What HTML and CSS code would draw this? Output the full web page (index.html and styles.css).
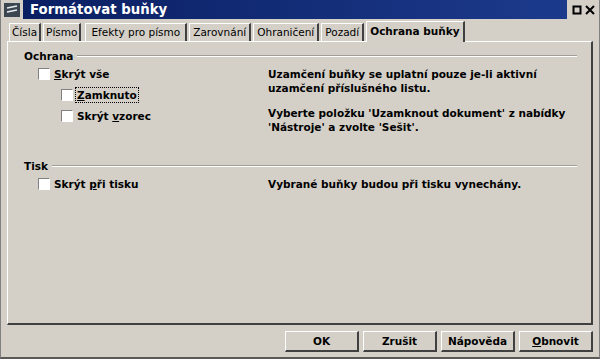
FILE: index.html
```html
<!DOCTYPE html>
<html lang="cs">
    <head>
        <title>Formátovat buňky</title>
        <meta charset="UTF-8">
        <link rel="stylesheet" href="styles.css">
    </head>
    <body>
        <div class="window">
            <div class="titlebar">
                <div class="app-icon">
                    <svg width="16" height="14" viewBox="0 0 16 14">
                        <rect x="0" y="0" width="16" height="14" fill="#3c4650"/>
                        <path d="M3 5 L13 3 M3 9 L13 7" stroke="#e8ecf0" stroke-width="1.5"/>
                    </svg>
                </div>
                <div class="title">Formátovat buňky</div>
                <div class="win-buttons">
                    <svg width="10" height="10" viewBox="0 0 10 10"><rect x="1.5" y="1.5" width="7" height="7" fill="none" stroke="#000" stroke-width="2"/></svg>
                    <svg width="10" height="10" viewBox="0 0 10 10"><path d="M1 1 L9 9 M9 1 L1 9" stroke="#000" stroke-width="2"/></svg>
                </div>
            </div>

            <div class="tabs">
                <div class="tab tight">Čísla</div>
                <div class="tab tight">Písmo</div>
                <div class="tab wide">Efekty pro písmo</div>
                <div class="tab">Zarovnání</div>
                <div class="tab">Ohraničení</div>
                <div class="tab">Pozadí</div>
                <div class="tab active">Ochrana buňky</div>
            </div>

            <div class="panel">
                <div class="group">
                    <div class="legend"><span>Ochrana</span><div class="rule"></div></div>
                    <div class="group-body">
                        <div class="options">
                            <div class="check"><span class="box"></span><span><u>S</u>krýt vše</span></div>
                            <div class="check sub"><span class="box"></span><span class="focus"><u>Z</u>amknuto</span></div>
                            <div class="check sub"><span class="box"></span><span>Skrýt <u>v</u>zorec</span></div>
                        </div>
                        <div class="notes">
                            <p>Uzamčení buňky se uplatní pouze je-li aktivní<br>uzamčení příslušného listu.</p>
                            <p>Vyberte položku 'Uzamknout dokument' z nabídky<br>'Nástroje' a zvolte 'Sešit'.</p>
                        </div>
                    </div>
                </div>

                <div class="group print">
                    <div class="legend"><span>Tisk</span><div class="rule"></div></div>
                    <div class="group-body">
                        <div class="options">
                            <div class="check"><span class="box"></span><span>Skrýt <u>p</u>ři tisku</span></div>
                        </div>
                        <div class="notes">
                            <p>Vybrané buňky budou při tisku vynechány.</p>
                        </div>
                    </div>
                </div>
            </div>

            <div class="buttons">
                <button class="btn">OK</button>
                <button class="btn">Zrušit</button>
                <button class="btn">Nápověda</button>
                <button class="btn"><u>O</u>bnovit</button>
            </div>
        </div>
    </body>
</html>
```

FILE: styles.css
```css
html, body {
    margin: 0;
    padding: 0;
}
body {
    background-color: #d4d0c8;
    font-family: "DejaVu Sans", sans-serif;
    font-size: 10.5px;
    color: #000;
}
.window {
    width: 600px;
    height: 359px;
    box-sizing: border-box;
    border-left: 1px solid #808080;
    border-right: 1px solid #808080;
    border-bottom: 2px solid #5a5955;
    display: flex;
    flex-direction: column;
}
.titlebar {
    height: 19px;
    display: flex;
    align-items: center;
    flex-shrink: 0;
}
.app-icon {
    width: 22px;
    height: 19px;
    display: flex;
    align-items: center;
    justify-content: center;
}
.title {
    flex: 1;
    height: 19px;
    line-height: 19px;
    padding-left: 7px;
    background: linear-gradient(to right, #0a1f62, #1c3a8c);
    color: #fff;
    font-weight: bold;
    font-size: 13.3px;
}
.win-buttons {
    width: 32px;
    display: flex;
    gap: 3px;
    justify-content: center;
}
.tabs {
    display: flex;
    align-items: flex-end;
    height: 22px;
    padding-left: 8px;
    flex-shrink: 0;
}
.tab {
    height: 18px;
    line-height: 17px;
    padding: 0 3px;
    border-left: 1px solid #fff;
    border-right: 2px solid #404040;
    border-top: 1px solid #fff;
    box-sizing: border-box;
    margin-right: 2px;
}
.tab.tight {
    padding: 0 2px;
}
.tab.wide {
    padding: 0 5px;
    margin-left: 2px;
}
.tab.active {
    height: 21px;
    line-height: 19px;
    font-weight: bold;
    background: #d4d0c8;
    margin-bottom: -1px;
    position: relative;
    z-index: 1;
    margin-right: 0;
}
.panel {
    flex: 1;
    margin: 0 6px;
    border-top: 1px solid #fff;
    border-left: 1px solid #fff;
    border-right: 2px solid #404040;
    border-bottom: 2px solid #404040;
    padding: 7px 14px 0 16px;
}
.legend {
    display: flex;
    align-items: center;
    gap: 4px;
    height: 13px;
    font-weight: bold;
}
.rule {
    flex: 1;
    height: 0;
    border-top: 1px solid #a09e98;
    border-bottom: 1px solid #fff;
}
.group-body {
    display: flex;
}
.options {
    width: 230px;
    padding: 1px 0 0 14px;
}
.check {
    display: flex;
    align-items: center;
    gap: 4px;
    height: 21px;
    font-weight: bold;
}
.check.sub {
    padding-left: 23px;
}
.box {
    width: 10px;
    height: 10px;
    background: #fff;
    border-top: 1px solid #808080;
    border-left: 1px solid #808080;
    border-bottom: 1px solid #fff;
    border-right: 1px solid #fff;
}
.focus {
    outline: 1px dotted #000;
    outline-offset: 1px;
}
.notes {
    padding-top: 5px;
    white-space: nowrap;
}
.notes p {
    margin: 0;
    font-weight: bold;
    line-height: 14px;
}
.notes p + p {
    margin-top: 11px;
}
.print {
    margin-top: 25px;
}
.buttons {
    height: 32px;
    display: flex;
    justify-content: flex-end;
    align-items: center;
    gap: 4px;
    padding-right: 6px;
    flex-shrink: 0;
}
.btn {
    width: 74px;
    height: 21px;
    font-family: "DejaVu Sans", sans-serif;
    font-size: 10.5px;
    font-weight: bold;
    background: #d4d0c8;
    border-top: 1px solid #fff;
    border-left: 1px solid #fff;
    border-right: 2px solid #404040;
    border-bottom: 2px solid #404040;
    padding: 0;
}
```
